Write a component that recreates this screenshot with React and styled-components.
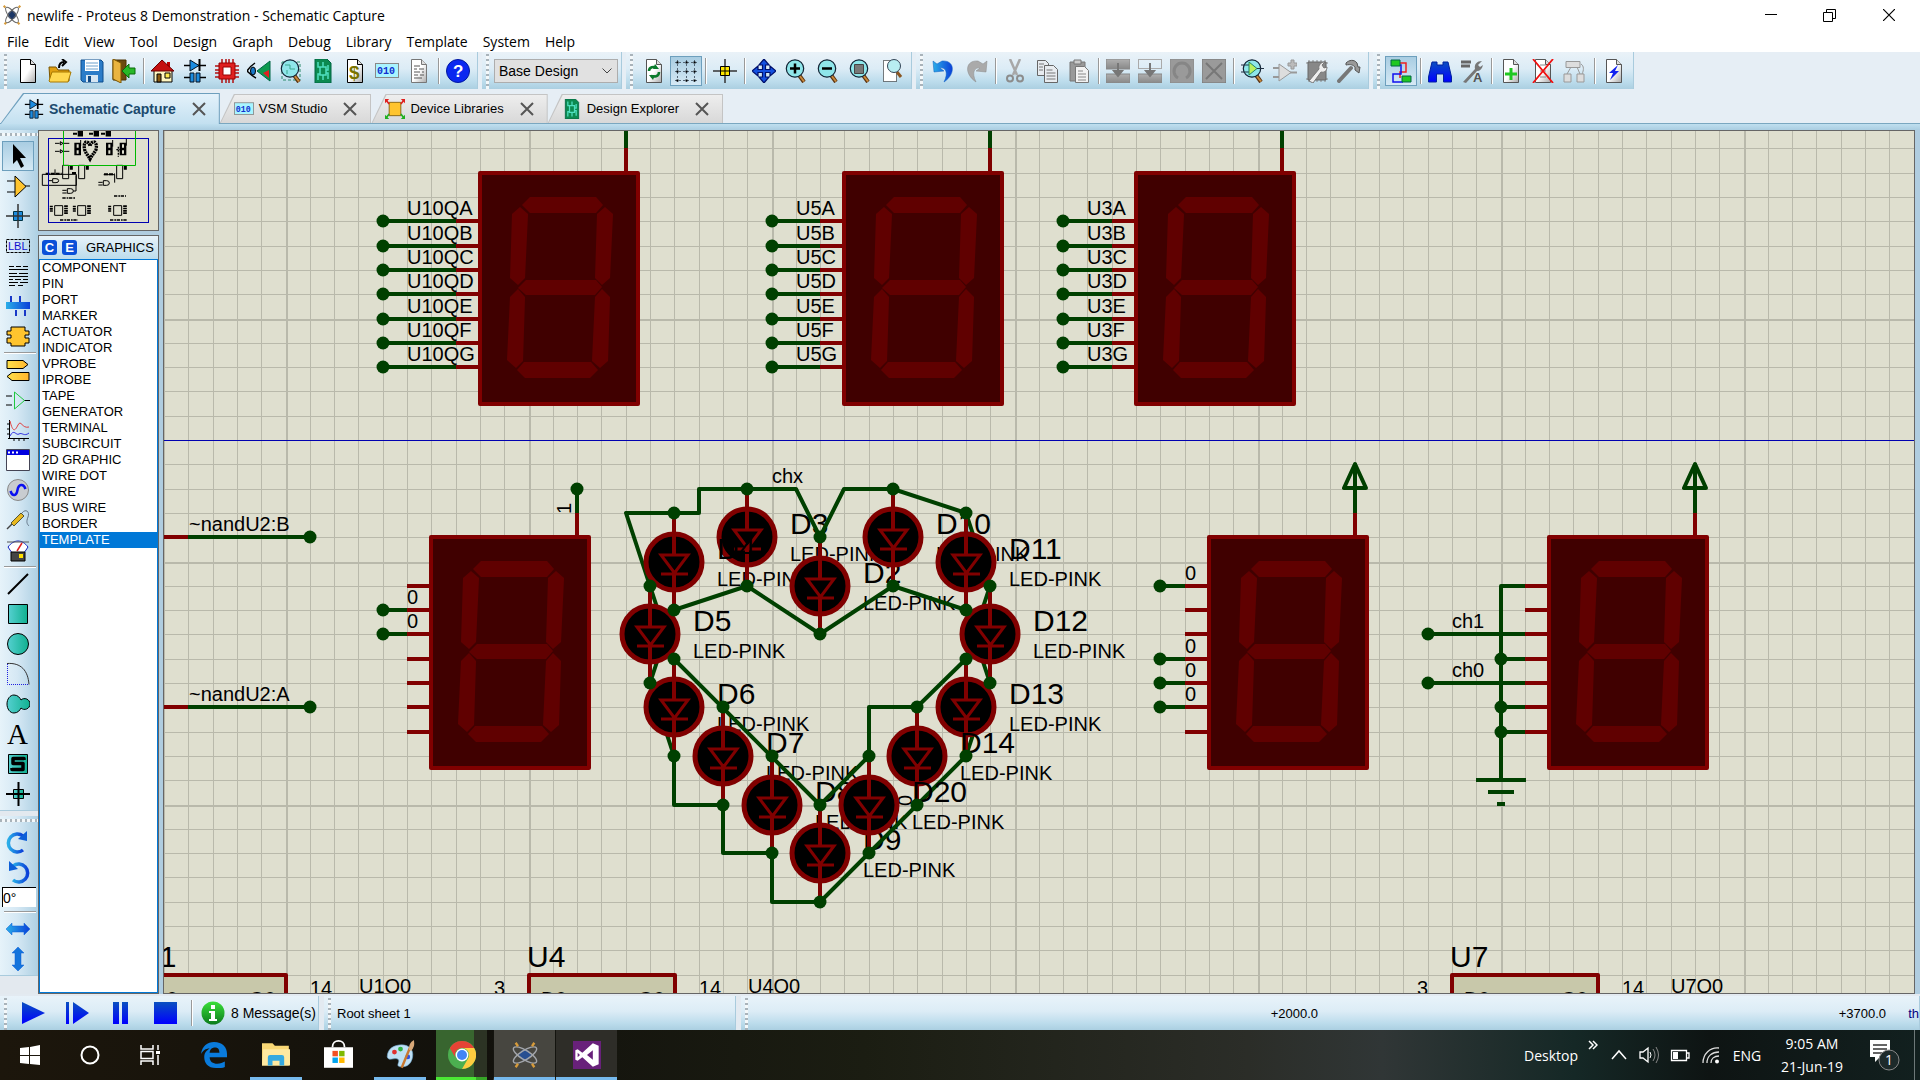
import React from "react";
import styled, { createGlobalStyle, css } from "styled-components";

const UI = `"Liberation Sans", Arial, sans-serif`;
const SHELL = `"Open Sans", "Noto Sans", sans-serif`;

const Global = createGlobalStyle`
  * { box-sizing: border-box; }
  body { margin: 0; background: #e6eef5; font-family: ${UI}; font-size: 13px; color: #000; overflow: hidden; }
  button { font: inherit; color: inherit; margin: 0; padding: 0; border: 0; background: none; }
  svg { display: block; flex: none; }
`;

const App_ = styled.div`display: flex; flex-direction: column; height: 100vh;`;

/* ---------- title and menu ---------- */
const TitleBar = styled.header`
  display: flex; align-items: center; height: 30px; padding: 0 2px; background: #fff;
  font-family: ${SHELL}; font-size: 14px;
`;
const Title = styled.h1`flex: 1; margin: 0 0 0 5px; font-size: 14px; font-weight: 400;`;
const WindowButton = styled.button`width: 59px; height: 30px; display: grid; place-items: center;`;
const MenuBar = styled.nav`
  display: flex; gap: 15px; height: 22px; padding-left: 7px; background: #fff;
  font-family: ${SHELL}; font-size: 14px; line-height: 24px;
`;

/* ---------- toolbars ---------- */
const ToolbarRow = styled.div`display: flex; gap: 4px; height: 37px; background: #e6eef5;`;
const Toolbar = styled.div`
  display: flex; align-items: center; padding-right: 3px; border-right: 1px solid #a9cbdd;
  background: linear-gradient(#eaf2f8, #dcecf6 45%, #bcdcec 80%, #abcfe1);
`;
const Grip = styled.span`
  align-self: stretch; flex: none;
  background-image: linear-gradient(#a9b3ba 50%, #f4f8fa 50%);
  ${(p) => p.$across
    ? css`height: 3px; margin: 3px 0 5px; background-image: linear-gradient(90deg, #a9b3ba 50%, #f4f8fa 50%); background-size: 5px 3px;`
    : css`width: 3px; margin: 2px 5px 0 4px; background-size: 3px 5px;`}
`;
const Tool = styled.button`
  width: 32px; height: 30px; display: grid; place-items: center; flex: none;
  ${(p) => p.$active && css`border: 1px solid #6d9fbd; background: linear-gradient(#a9cde2, #d5e9f5);`}
`;
const Rule = styled.span`
  flex: none;
  ${(p) => p.$across
    ? css`height: 2px; width: 32px; margin: 1px 0 1px 4px; background: #999; border-bottom: 1px solid #fff;`
    : css`width: 2px; height: 26px; margin: 0 2px 0 3px; background: #999; border-right: 1px solid #fff;`}
`;
const SelectBox = styled.div`display: grid; width: 124px; height: 24px; align-items: center; & > * { grid-area: 1 / 1; }`;
const Select = styled.select`
  appearance: none; width: 100%; height: 24px; padding: 0 4px; border: 1px solid #adadad; border-radius: 0;
  background: #e1e1e1; font: 14px ${UI}; color: #000;
`;
const SelectArrow = styled.svg`justify-self: end; margin-right: 6px; pointer-events: none;`;

/* ---------- tabs ---------- */
const Tabs = styled.div`
  display: flex; align-items: flex-end; height: 35px; background: linear-gradient(#7aa7c0, #7aa7c0) bottom / 100% 1px no-repeat #e6eef5;
`;
const Tab = styled.div`
  position: relative; isolation: isolate; display: flex; align-items: center;
  height: ${(p) => (p.$active ? 31 : 29)}px;
  margin-bottom: ${(p) => (p.$active ? 0 : 1)}px;
  padding: 0 14px 0 ${(p) => (p.$active ? 24 : 14)}px;
  font-size: ${(p) => (p.$active ? 14 : 13)}px;
  font-weight: ${(p) => (p.$active ? 700 : 400)};
  color: ${(p) => (p.$active ? "#1c4a6e" : "#000")};
  &::before, &::after {
    content: ""; position: absolute; z-index: -1; inset: 0;
    clip-path: polygon(${(p) => (p.$active ? 23 : 14)}px 0, 100% 0, 100% 100%, 0 100%);
    background: ${(p) => (p.$active ? "#6d9fbd" : "#c4c4c4")};
  }
  &::after {
    inset: 1px 1px 0 1px;
    background: ${(p) => (p.$active ? "linear-gradient(#e4f2fb, #c3e0f0)" : "linear-gradient(#eeeeee, #d8d8d8)")};
  }
`;
const TabName = styled.button`display: flex; align-items: center; gap: 5px; white-space: nowrap;`;
const TabClose = styled.button`display: grid; place-items: center; margin-left: 16px;`;
const Band = styled.div`height: 6px; background: linear-gradient(#bfdfef, #aacde1);`;

/* ---------- work area ---------- */
const Main = styled.main`display: flex; flex: 1; min-height: 0; background: #b0cde0;`;
const ModeColumn = styled.div`width: 38px; background: #e3e9ef; display: flex; flex-direction: column; gap: 5px;`;
const ModeBar = styled.div`
  display: flex; flex-direction: column; padding-bottom: 1px; border-bottom: 1px solid #a9cbdd;
  background: linear-gradient(90deg, #e6f3fa, #d5e8f4 45%, #aed0e3);
  ${Tool} { margin-left: 2px; }
`;
const AngleInput = styled.input`
  width: 34px; height: 20px; margin: 0 0 3px 2px; padding: 0; border: 1px solid #000; border-width: 1px 0 0 1px; border-radius: 0;
  background: #fff; font: 14px ${UI};
`;
const Side = styled.div`width: 121px; display: flex; flex-direction: column; gap: 4px; margin-right: 4px;`;
const Overview = styled.div`height: 101px; border: 1px solid #666; background: #dfdfcf;`;
const Selector = styled.section`flex: 1; min-height: 0; display: flex; flex-direction: column; border: 1px solid #666;`;
const SelectorHead = styled.div`
  display: flex; align-items: center; gap: 5px; height: 23px; padding-left: 3px;
  background: linear-gradient(#e8f3fa, #bcdcec);
`;
const Chip = styled.button`
  width: 15px; height: 15px; border-radius: 3px; background: #0a50d8; color: #fff; font-weight: 700; line-height: 15px;
`;
const SelectorTitle = styled.h2`margin: 0 0 0 4px; font-size: 13px; font-weight: 400;`;
const List = styled.ul`flex: 1; margin: 0; padding: 0; list-style: none; background: #fff; border: 1px solid #0078d7;`;
const Item = styled.li`
  padding-left: 2px; line-height: 16px;
  ${(p) => p.$selected && css`background: #0078d7; color: #fff;`}
`;
const Sheet = styled.div`
  flex: 1; min-width: 0; margin-right: 5px; border: 1px solid #666; background: #dfdfcf; overflow: hidden;
`;
const Drawing = styled.svg`
  width: 100%; height: 100%; font-family: ${UI};
`;

/* ---------- status ---------- */
const StatusBar = styled.footer`display: flex; gap: 5px; height: 36px; padding-top: 2px; background: #e3eaf1;`;
const StatusPart = styled.div`
  display: flex; align-items: center; width: ${(p) => p.$width}; flex: ${(p) => (p.$width ? "none" : 1)};
  border-right: 1px solid #a9cbdd; white-space: nowrap; overflow: hidden;
  background: linear-gradient(#e8f3fa, #dcecf6 45%, #bcdcec 80%, #abcfe1);
`;
const RunButton = styled.button`width: 44px; height: 30px; display: grid; place-items: center;`;
const Messages = styled.button`display: flex; align-items: center; gap: 6px; margin-left: 6px; font-size: 14px;`;
const StatusText = styled.span`margin-left: 1px;`;
const Coordinates = styled.div`
  flex: 1; display: grid; grid-template-columns: 565px 1fr 33px; text-align: right;
`;
const Unit = styled.span`color: #000080;`;

/* ---------- taskbar ---------- */
const TaskBar = styled.footer`
  display: flex; height: 50px; color: #fff; font-family: ${SHELL}; font-size: 14px;
  background: linear-gradient(90deg, #1c160c, #12110c 25%, #1b1d12 45%, #2b2d28 65%, #303636 72%, #152826 82%, #0e1413 89%, #12201f);
`;
const TaskButton = styled.button`
  width: ${(p) => (p.$app ? 62 : 60)}px; height: 50px; display: grid; place-items: center; flex: none;
  border-bottom: 3px solid transparent; padding-top: 2px;
  ${(p) => p.$open && css`
    background: linear-gradient(#76b9ed, #76b9ed) bottom / 52px 3px no-repeat border-box;
  `}
  ${(p) => p.$front && css`
    border-left: 1px solid #14140f;
    background: linear-gradient(#76b9ed, #76b9ed) bottom / 100% 3px no-repeat border-box, ${p.$front};
  `}
  ${(p) => p.$progress && css`
    background: linear-gradient(90deg, #4be834 40px, #36a527 40px) 5px 100% / 51px 3px no-repeat border-box,
      linear-gradient(90deg, #38652f 38px, #2c3324 38px) 5px 0 / 51px 100% no-repeat border-box;
  `}
`;
const Apps = styled.div`display: flex; flex: 1; & > :nth-child(4) { margin-left: 3px; }`;
const Tray = styled.div`display: flex; align-items: center;`;
const TrayButton = styled.button`
  display: grid; place-items: center; height: 50px; width: ${(p) => p.$width}px;
  align-content: center; line-height: 23px; white-space: nowrap;
`;
const ShowDesktop = styled.button`width: 6px; height: 50px; border-left: 1px solid #6d7878;`;

/* ================= icons ================= */
const I = ({ children, s = 24, b = 24 }) => (
  <svg width={s} height={s} viewBox={`0 0 ${b} ${b}`} aria-hidden="true">{children}</svg>
);
const SharedPaint = () => (
  <svg width="0" height="0" style={{ position: "absolute" }} aria-hidden="true">
    <defs>
      <linearGradient id="teal"><stop stopColor="#55d0d0" /><stop offset="1" stopColor="#10b090" /></linearGradient>
      <linearGradient id="gold"><stop stopColor="#ffe04a" /><stop offset="1" stopColor="#ffb52e" /></linearGradient>
      <linearGradient id="blueH"><stop stopColor="#2aaee8" /><stop offset="1" stopColor="#0a3fd8" /></linearGradient>
      <linearGradient id="blueV" x2="0" y2="1"><stop stopColor="#0a50c0" /><stop offset="1" stopColor="#0000ff" /></linearGradient>
      <linearGradient id="greenV" x2="0" y2="1"><stop stopColor="#3ae03a" /><stop offset="1" stopColor="#0c7a1c" /></linearGradient>
      <linearGradient id="greyD" x2="1" y2="1"><stop offset=".5" stopColor="#fff" /><stop offset="1" stopColor="#aaa" /></linearGradient>
      <linearGradient id="greyV" x2="0" y2="1"><stop stopColor="#b0b0b0" /><stop offset="1" stopColor="#888" /></linearGradient>
    </defs>
  </svg>
);
const Paper = ({ stroke = "#000" }) => (
  <>
    <path d="M4.500.5h10l5 5v18h-15z" fill="url(#greyD)" stroke={stroke} />
    <path d="M14.500.5v5h5" fill="#ddd" stroke={stroke} />
  </>
);
const Lens = ({ children }) => (
  <>
    <path d="M15 16l5 7" stroke="#5a3210" strokeWidth="4" />
    <path d="M15 16l5 6.500" stroke="#c98a3c" strokeWidth="2" />
    <circle cx="11" cy="9.500" r="8.700" fill="#8fe6ea" stroke="#123" strokeWidth="1.200" />
    {children}
  </>
);
const Pcb = () => (
  <>
    <path d="M4 0h12l4 4v20H4z" fill="#0c8a50" stroke="#064" />
    <path d="M9 8h6v8H9zM7 3v5h2M12 3v5M17 6v5h-2M7 21v-6h2M12 21v-5M17 20v-6h-2" fill="none" stroke="#4fe0c0" strokeWidth="1.500" />
  </>
);
const Binary = () => (
  <>
    <rect x="0.500" y="4.500" width="23" height="14" fill="#a8f4ff" stroke="#888" />
    <text x="2" y="15" fontFamily="Liberation Mono" fontSize="10" fontWeight="700" fill="#1030d0">010</text>
  </>
);
const Diode = () => (
  <>
    <path d="M1 6.500h22" stroke="#000" strokeWidth="1.500" />
    <path d="M7 1l9 5.500L7 12z" fill="#1c8ce0" stroke="#012" />
    <path d="M16.500 0v12" stroke="#000" strokeWidth="2" />
    <path d="M1 18.500h6M17 18.500h6" stroke="#000" strokeWidth="1.500" />
    <path d="M7 14h4v9H7zM13 14h4v9h-4z" fill="#1c8ce0" stroke="#012" />
  </>
);
const Atom = ({ dim }) => (
  <g fill="none" strokeWidth="1.200" stroke={dim ? "#a3a6ab" : "#666"}>
    <circle cx="12" cy="12" r="5" fill={dim ? "#274f92" : "#1a3666"} stroke="none" />
    <ellipse cx="12" cy="12" rx="11.500" ry="4" transform={`rotate(${dim ? 32 : 52} 12 12)`} />
    <ellipse cx="12" cy="12" rx="11.500" ry="4" transform={`rotate(${dim ? -32 : -52} 12 12)`} />
    {dim
      ? <path d="M4 1.500l2 3M20 1.500l-2 3M4 22.500l2-3M20 22.500l-2-3" stroke="#d79b3a" strokeWidth="2" />
      : <path d="M2 1l2 2M22 1l-2 2M3 23l2-2M21 23l-2-2" stroke="#d79b3a" strokeWidth="2.500" />}
  </g>
);
const BlockGrey = ({ children, top = true }) => (
  <>
    {top ? <rect width="24" height="10" fill="url(#greyV)" stroke="#888" /> : <rect x=".5" y=".5" width="23" height="9" fill="none" stroke="#aaa" />}
    <rect y="15" width="24" height="9" fill="url(#greyV)" stroke="#888" />
    {children}
  </>
);
const Curl = ({ a, b }) => (
  <path d="M1 2l1 11 10-1-4-3c5-1 9 4 4 14 12-8 11-22-2-21L5 5z" fill={a} stroke={b} strokeWidth=".5" />
);
const ic = {
  file: <Paper />,
  open: <><path d="M1 8h7l2 3h11v11H2z" fill="#e0a010" stroke="#7a5500" /><path d="M1 22l3-9h19l-3 10H2z" fill="#ffd850" stroke="#a87800" /><path d="M11 9c0-5 2-6 5-6M14 0l4 3-4 4" fill="none" stroke="#000" strokeWidth="2" /></>,
  save: <><path d="M1 1h20l2 2v20H3l-2-2z" fill="#2b7cc8" stroke="#0d4d8c" /><path d="M5 1h14v11H5z" fill="#fff" /><path d="M6 4h12M6 7h12M6 10h12" stroke="#6aa0cc" /><path d="M6 16h12v7H6z" fill="#d7e6f2" /><path d="M8 17h3v6H8z" fill="#124b86" /></>,
  exit: <><path d="M1 1h13v20H1z" fill="#6b4a10" stroke="#4c3000" /><path d="M1 0l8 4v20l-8-4z" fill="#e9b440" stroke="#7a5500" /><path d="M23 9h-6V5l-7 7 7 7v-4h6z" fill="#28b828" stroke="#0a6a0a" /></>,
  home: <><path d="M16 3h3v6h-3z" fill="#c00000" /><path d="M3 11h18v12H3z" fill="#fff6c0" stroke="#000" /><path d="M0 12L11 1l12 11H0z" fill="#c41010" stroke="#600" /><path d="M6 15h4v8H6z" fill="#8a5a10" stroke="#000" /><path d="M14 14h5v5h-5z" fill="#ffea50" stroke="#000" /></>,
  diode: <Diode />,
  chip: <><path d="M7 0v24M11 0v24M14 0v24M18 0v24M0 7h24M0 11h24M0 14h24M0 18h24" stroke="#b01010" strokeWidth="1.500" /><path d="M4 4h16v16H4z" fill="#e02020" stroke="#900" /><path d="M8 8h8v8H8z" fill="#fff" stroke="#900" /></>,
  eye: <><path d="M8 4C2 8 1 11 0 12c3 3 5 5 9 7" fill="none" stroke="#000" strokeWidth="1.500" /><ellipse cx="6" cy="12" rx="2.500" ry="4" fill="#1878c8" stroke="#000" /><path d="M10 12L23 2v20z" fill="#0d9a50" stroke="#064" /><path d="M16 14l6-3v8z" fill="#e02020" /></>,
  zoomPcb: <><path d="M3 3h18v18H3z" fill="none" stroke="#2a8a6a" strokeDasharray="3 2" /><Lens><path d="M6 6h5v4h5M8 15v-4" stroke="#3aa890" fill="none" /></Lens></>,
  pcb: <Pcb />,
  bill: <><Paper /><text x="6" y="20" fontFamily="Liberation Sans" fontSize="19" fontWeight="700" fill="#7a7400">$</text></>,
  binary: <Binary />,
  notes: <><Paper stroke="#777" /><path d="M7 7h6M7 10h3M12 10h5M7 13h6M15 13h2M7 16h4M13 16h4M7 19h8" stroke="#555" /></>,
  help: <><circle cx="12" cy="12" r="11.500" fill="#0a28f0" stroke="#0018a0" /><text x="7" y="18" fontFamily="Liberation Sans" fontSize="17" fontWeight="700" fill="#fff">?</text></>,
  refresh: <><Paper stroke="#555" /><path d="M7 12c0-4 5-5 7-3M17 13c0 5-5 5-8 4" fill="none" stroke="#0a7a2a" strokeWidth="2.500" /><path d="M13 5l4 5h-6zM11 21l-4-5h6z" fill="#0a7a2a" /></>,
  dots: <><path d="M1 3.500h22M1 12.500h22M1 21.500h22M3.500 1v22M12.500 1v22M20.500 1v22" stroke="#567" strokeDasharray="2 2" /><path d="M2.500 3.500h2M11.500 3.500h2M19.500 3.500h2M2.500 12.500h2M11.500 12.500h2M19.500 12.500h2M2.500 21.500h2M11.500 21.500h2M19.500 21.500h2" stroke="#000" strokeWidth="2" /></>,
  origin: <><path d="M12 0v24M0 12h24" stroke="#333" strokeWidth="1.500" /><path d="M7.500 7.500h9v9h-9z" fill="#ffe800" stroke="#000" /><path d="M12 8v8M8 12h8" stroke="#000" /></>,
  pan: <path d="M12 0l5 6h-3.500v4.500H18V7l6 5-6 5v-3.500h-4.500V18H17l-5 6-5-6h3.500v-4.500H6V17l-6-5 6-5v3.500h4.500V6H7z" fill="#1450e0" stroke="#00106a" strokeWidth="1.200" />,
  zin: <Lens><path d="M6 9.500h10M11 4.500v10" stroke="#000" strokeWidth="2.500" /></Lens>,
  zout: <Lens><path d="M6 9.500h10" stroke="#000" strokeWidth="2.500" /></Lens>,
  zall: <Lens><path d="M6.500 5.500h9v9h-9z" fill="#777" stroke="#444" /></Lens>,
  zarea: <><path d="M3.500 1.500h13v21h-13z" fill="#fff" stroke="#000" strokeDasharray="1 1" /><path d="M17 13l4 5" stroke="#8a5520" strokeWidth="3" /><circle cx="14" cy="7" r="6.500" fill="#b8eef2" stroke="#345" /></>,
  undo: <Curl a="url(#blueH)" b="#0d5cc0" />,
  redo: <g transform="translate(24 0) scale(-1 1)"><Curl a="#aaa" b="#888" /></g>,
  cut: <g stroke="#8c8c8c" fill="none" strokeWidth="2"><path d="M7 0l7 16M17 0l-7 16" stroke="#a8a8a8" strokeWidth="2.500" /><circle cx="7" cy="19.500" r="3" /><circle cx="17" cy="19.500" r="3" /></g>,
  copy: <g stroke="#666" fill="#e8ecf0"><path d="M2.500 1.500h8l3 3v12h-11z" /><path d="M9.500 6.500h9l4 4v13h-13z" /><path d="M4 5h5M4 8h4M4 11h4M11.500 11h6M11.500 14h9M11.500 17h9M11.500 20h9" fill="none" stroke="#777" /></g>,
  paste: <><path d="M3 3h15v19H3z" fill="#999" stroke="#777" /><path d="M7 1h7v4H7z" fill="#ccc" stroke="#777" /><path d="M8.500 7.500h9l4 4v12h-13z" fill="#f2f2f2" stroke="#777" /><path d="M11 12h5M11 15h8M11 18h8M11 21h8" stroke="#888" /></>,
  bcopy: <BlockGrey><path d="M12 4v8M8 12h8l-4 5z" fill="#777" stroke="#777" strokeWidth="2" /></BlockGrey>,
  bmove: <BlockGrey top={false}><path d="M12 4v8M8 12h8l-4 5z" fill="#777" stroke="#777" strokeWidth="2" /></BlockGrey>,
  brot: <><path d="M0 0h24v24H0z" fill="#9a9a9a" stroke="#888" /><path d="M8 19a8 8 0 1 1 8 0" fill="none" stroke="#868686" strokeWidth="3" /></>,
  bdel: <><path d="M0 0h24v24H0z" fill="#9a9a9a" stroke="#777" /><path d="M4 4l16 16M20 4L4 20" stroke="#777" strokeWidth="2" /></>,
  pick: <Lens><path d="M0 6h8M0 13h8M16 9.500h7" stroke="#234" /><path d="M8 3l8 6.500L8 16z" fill="#b8f060" stroke="#286" /></Lens>,
  make: <g stroke="#999" fill="#ddd"><path d="M0 9h6M0 18h6M17 13.500h7" strokeWidth="2" /><path d="M6 5l12 8.500L6 22z" /><path d="M15 4h3V1h3v3h3v3h-3v3h-3V7h-3z" fill="#bbb" /></g>,
  pack: <><path d="M4 1v22M8 1v22M12 1v22M16 1v22M20 1v22M1 4h22M1 20h22" stroke="#888" /><path d="M3 3h18v18H3z" fill="#888" stroke="#666" /><path d="M4 22L14 10c-1-4 2-7 6-7l-3 3 2 3 3-1c0 4-3 6-6 5L8 24z" fill="#eee" stroke="#777" /></>,
  hammer: <><path d="M2 22L14 9" stroke="#777" strokeWidth="4" strokeLinecap="round" /><path d="M9 4c3-3 8-4 11 0l1 4 2 0-1 6-4-3 0-3c-2-2-4-3-9-2z" fill="#999" stroke="#555" /></>,
  wire: <><path d="M8 4h9v9h-6v6" fill="none" stroke="#f02020" strokeWidth="1.500" /><path d="M8 6h4v9H4v8h10" fill="none" stroke="#1010f0" strokeWidth="1.500" /><path d="M2 1h9v6H2zM13 17h9v6h-9z" fill="#20c820" stroke="#064" /></>,
  find: <path d="M4 3h5v3h6V3h5l3.500 15v5h-8v-8h-7v8h-8v-5z" fill="url(#blueV)" stroke="#0020a0" />,
  prop: <><path d="M1 3h10M1 7h9" stroke="#666" strokeWidth="3" /><path d="M3 23L15 10c-1-5 2-8 7-8l-4 4 2 2 3-2c-1 4-3 6-6 6L6 24z" fill="#777" /><text x="13" y="23" fontFamily="Liberation Sans" fontSize="13" fontWeight="700" fill="#555">A</text></>,
  addSheet: <><Paper stroke="#555" /><path d="M12 9v12M6 15h12" stroke="#20c820" strokeWidth="3" /></>,
  delSheet: <><Paper stroke="#555" /><path d="M9 6h6M9 12h6M9 18h6" stroke="#888" /><path d="M2 0l20 24M22 0L2 24" stroke="#f01010" strokeWidth="1.800" /></>,
  tree: <g fill="#ddd" stroke="#999"><path d="M3 2.500h14v6H3zM1 15h7v8H1zM14 15h7v8h-7z" /><path d="M8 8l-4 7M14 8l3 7M18 5c3 2 3 6 1 10" fill="none" /></g>,
  bolt: <><Paper stroke="#555" /><path d="M16 6l-9 8h4l-3 7 9-9h-4z" fill="#1020f0" /></>,
  arrow: <path d="M7 0v20l4-4 4 8 3-2-4-8h6z" fill="#000" />,
  comp: <><path d="M1 7h8M1 18h8M19 12h5" stroke="#000" /><path d="M9 2l11 10.500L9 23z" fill="#ffc42e" stroke="#000" /></>,
  junction: <><path d="M7.500 7.500h9v9h-9z" fill="#1c8ce0" stroke="#034" /><path d="M12 0v24M0 12h24" stroke="#333" strokeWidth="1.500" /></>,
  label: <><path d="M.5 5.500h23v13H.5z" fill="none" stroke="#000" strokeDasharray="3 1" /><text x="2" y="16" fontFamily="Liberation Sans" fontSize="11" fill="#1010d0">LBL</text></>,
  script: <path d="M3 2.500h5M10 2.500h5M17 2.500h5M3 5.500h19M3 9.500h8M13 9.500h9M3 12.500h19M3 15.500h4M9 15.500h6M17 15.500h5M3 18.500h9M14 18.500h8M3 21.500h6M12 21.500h5" stroke="#000" />,
  bus: <><path d="M5 2v6M14 2v6M10 16v6M19 16v6" stroke="#1838c8" strokeWidth="2" /><path d="M0 8h24v7H0z" fill="url(#blueH)" /></>,
  sub: <path d="M5 3h14v4h4v4h-4v3h4v5h-4v3H5v-3H1v-5h4v-3H1V7h4z" fill="#ffc42e" stroke="#000" />,
  term: <g fill="url(#gold)" stroke="#000"><path d="M1 2.500h16l5 4-5 4H1zM23 14.500H6l-5 4 5 4h17z" /></g>,
  pin: <><path d="M0 8h6M0 17h6M18 12.500h6" stroke="#000" /><path d="M8.500 4v17l10-8.500z" fill="none" stroke="#20c840" /></>,
  graph: <><path d="M3.500 2v19M2 20.500h21M1 6h2M1 11h2M1 16h2M8 20v3M13 20v3M18 20v3" stroke="#000" /><path d="M4 3c3 12 5 10 8 4s4 4 11 2" fill="none" stroke="#e04040" /><path d="M4 18c4-8 6 0 9-2s5 3 10-1" fill="none" stroke="#3030e0" /></>,
  popup: <><path d="M.5 1.500h23v21H.5z" fill="#fff" stroke="#445" /><path d="M1 2h22v5H1z" fill="#0000e0" /><path d="M2 4.500h2M6 4.500h2M10 4.500h2" stroke="#fff" strokeWidth="2" /></>,
  gen: <><circle cx="12" cy="12" r="10.500" fill="#c8ccd0" stroke="#888" /><path d="M4.500 13c2 6 6 5 7-1s6-7 8-1" fill="none" stroke="#0a10f0" strokeWidth="2.500" /></>,
  probe: <><path d="M1 21l5-5" stroke="#444" strokeWidth="1.500" /><path d="M5 15L15 5l3 3L8 18z" fill="#e8b820" stroke="#553" /><path d="M16 5c4-5 8-1 6 4s-1 7 1 9" fill="none" stroke="#678" /></>,
  meter: <><path d="M2 9C8 1 16 1 22 9l-4 6H6z" fill="#fff" stroke="#1020c0" /><path d="M1 4h22" stroke="#555" /><path d="M11 13l5-8" stroke="#e02020" strokeWidth="1.500" /><path d="M5 14h14v9H5z" fill="#444" stroke="#000" /><path d="M13 16h4v4h-4z" fill="#ffe000" /></>,
  line: <path d="M2 22L22 2" stroke="#000" strokeWidth="2" />,
  box: <path d="M2.500 2.500h19v19h-19z" fill="url(#teal)" stroke="#000" />,
  circ: <circle cx="12" cy="12" r="10.500" fill="url(#teal)" stroke="#000" />,
  arc: <><path d="M1.500 2v20.500H23" fill="none" stroke="#2020e0" strokeDasharray="1 1" /><path d="M1 1.500c14-1 21 7 22 21" fill="none" stroke="#333" /></>,
  path: <path d="M8 3c4 0 6 3 7 5 3-3 9-1 9 4s-6 7-9 4c-1 2-3 5-7 5-4 0-7-4-7-9s3-9 7-9z" fill="url(#teal)" stroke="#000" />,
  text: <text x="1" y="22" fontFamily="Liberation Serif" fontSize="29" fill="#000">A</text>,
  sym: <><path d="M2.500 2.500h19v19h-19z" fill="url(#teal)" stroke="#000" /><path d="M18 8V6.500H7v5h10v6H6V16" fill="none" stroke="#000" strokeWidth="3.500" strokeLinejoin="round" /></>,
  mark: <><path d="M7.500 7.500h10v9h-10z" fill="url(#teal)" stroke="#000" /><path d="M12.500 0v24M0 12h24" stroke="#000" strokeWidth="2" /></>,
  cw: <><path d="M17 20a9 9 0 1 1 0-14" fill="none" stroke="url(#blueH)" strokeWidth="3.500" /><path d="M21 1v10l-9-2z" fill="#0d5fd8" /></>,
  ccw: <><path d="M7 20a9 9 0 1 0 0-14" fill="none" stroke="url(#blueH)" strokeWidth="3.500" /><path d="M3 1v10l9-2z" fill="#0d5fd8" /></>,
  flipH: <path d="M0 12l6-6v3h12V6l6 6-6 6v-3H6v3z" fill="url(#blueH)" stroke="#0d5fd8" strokeWidth=".5" />,
  flipV: <path d="M12 0l6 6h-3v12h3l-6 6-6-6h3V6H6z" fill="#1474dc" stroke="#0d5fd8" strokeWidth=".5" />,
  lib: <><path d="M5 4h14v16H5z" fill="#ffc42e" stroke="#7a5500" /><path d="M5 6l-4-5M19 6l4-5" stroke="#e02020" strokeWidth="2" /><path d="M5 18l-4 5M19 18l4 5" stroke="#20b020" strokeWidth="2" /><path d="M0 0h5L0 5zM24 0v5l-5-5z" fill="#e02020" /><path d="M0 24v-5l5 5zM24 24h-5l5-5z" fill="#20b020" /></>,
};

const bars = [
  [["New project", "file"], ["Open project", "open"], ["Save project", "save"], ["Close project", "exit"], 0, ["Home", "home"], ["Schematic capture", "diode"], ["PCB layout", "chip"], ["3D visualizer", "eye"], ["Gerber viewer", "zoomPcb"], ["Design explorer", "pcb"], ["Bill of materials", "bill"], ["Source code", "binary"], ["Project notes", "notes"], 0, ["Help", "help"]],
  [["Redraw", "refresh"], ["Grid", "dots", 1], 0, ["Origin", "origin"], 0, ["Pan", "pan"], ["Zoom in", "zin"], ["Zoom out", "zout"], ["Zoom all", "zall"], ["Zoom area", "zarea"]],
  [["Undo", "undo"], ["Redo", "redo"], 0, ["Cut", "cut"], ["Copy", "copy"], ["Paste", "paste"], 0, ["Block copy", "bcopy"], ["Block move", "bmove"], ["Block rotate", "brot"], ["Block delete", "bdel"], 0, ["Pick parts", "pick"], ["Make device", "make"], ["Packaging tool", "pack"], ["Decompose", "hammer"]],
  [["Wire autorouter", "wire", 1], 0, ["Search", "find"], ["Property assignment", "prop"], 0, ["New sheet", "addSheet"], ["Remove sheet", "delSheet"], ["Exit to parent", "tree"], 0, ["Electrical check", "bolt"]],
];
const modes = [["Selection", "arrow", 1], ["Component", "comp"], ["Junction dot", "junction"], ["Wire label", "label"], ["Text script", "script"], ["Buses", "bus"], ["Subcircuit", "sub"], 0, ["Terminals", "term"], ["Device pins", "pin"], ["Graph", "graph"], ["Active popup", "popup"], ["Generator", "gen"], ["Probe", "probe"], ["Instruments", "meter"], 0, ["Line", "line"], ["Box", "box"], ["Circle", "circ"], ["Arc", "arc"], ["Path", "path"], ["Text", "text"], ["Symbols", "sym"], ["Markers", "mark"]];
const turns = [["Rotate clockwise", "cw"], ["Rotate anti-clockwise", "ccw"]];
const flips = [["Mirror horizontally", "flipH"], ["Mirror vertically", "flipV"]];

const Tools = ({ items, across }) =>
  items.map((t, i) => t
    ? <Tool key={i} type="button" aria-label={t[0]} $active={t[2]}><I>{ic[t[1]]}</I></Tool>
    : <Rule key={i} $across={across} />);

/* ================= schematic ================= */
const PITCH = 24.3;
const gx = (n) => Math.floor(122 + PITCH * n);
const gy = (n) => Math.floor(188 + PITCH * n);
const WIRE = "#004000";
const PIN = "#800000";

const Line = ({ pts, color = WIRE }) => (
  <polyline points={pts.map(([x, y]) => `${gx(x)},${gy(y)}`).join(" ")} fill="none" stroke={color} strokeWidth="4" strokeLinejoin="round" />
);
const Dot = ({ x, y }) => <circle cx={gx(x)} cy={gy(y)} r="6.500" fill={WIRE} />;
const Label = ({ x, y, size = 20, children, turn }) => (
  <text x={x} y={y} fontSize={size} transform={turn ? `rotate(-90 ${x} ${y})` : undefined}>{children}</text>
);

const Grid = () => {
  const lines = [];
  for (let n = -5; n < 150; n++) {
    const w = n % 10 === 0 ? 2 : 1;
    lines.push(<rect key={"v" + n} x={gx(n)} y="0" width={w} height="100%" />);
  }
  for (let n = -7; n < 80; n++) {
    const w = n % 10 === 0 ? 2 : 1;
    lines.push(<rect key={"h" + n} x="0" y={gy(n)} width="100%" height={w} />);
  }
  return <g fill="#b9b9ab">{lines}</g>;
};

const segments = [
  "42,32 50,24 116,24 123,32 116,40 50,40",
  "40,34 48,41 45,105 38,112 30,105 32,41",
  "125,34 133,41 130,105 122,112 115,105 117,41",
  "38,115 46,107 116,107 122,114 115,122 46,122",
  "38,116 45,124 43,188 36,195 27,187 30,124",
  "122,116 130,124 128,188 120,195 112,188 115,124",
  "37,197 44,189 111,189 118,197 110,205 45,205",
];
const Display = ({ x, y, green = [] }) => (
  <g>
    {[0, 1, 2, 3, 4, 5, 6].map((i) => <Line key={i} color={PIN} pts={[[x - 1, y + 2 + i], [x, y + 2 + i]]} />)}
    <Line color={PIN} pts={[[x + 6, y - 1], [x + 6, y]]} />
    {green.map(([from, row, text, tx]) => (
      <g key={row}>
        <Line pts={[[from, row], [x - 1, row]]} />
        <Dot x={from} y={row} />
        {text && <Label x={gx(tx)} y={gy(row) - 6}>{text}</Label>}
      </g>
    ))}
    <g transform={`translate(${gx(x)} ${gy(y)})`}>
      <rect width="158" height="231" fill="#400000" stroke={PIN} strokeWidth="4" strokeLinejoin="round" />
      {segments.map((s) => <polygon key={s} points={s} fill="#600000" />)}
    </g>
  </g>
);

const Led = ({ x, y }) => {
  const cx = gx(x), cy = gy(y);
  return (
    <g fill="none" stroke={PIN} strokeWidth="4">
      <Line color={PIN} pts={[[x, y - 2], [x, y + 2]]} />
      <circle cx={cx} cy={cy} r="28" fill="#000" strokeWidth="5" />
      <path d={`M${cx} ${cy - 28}V${cy + 28}`} />
      <path d={`M${cx - 13} ${cy - 7}h27l-13.500 18zM${cx - 13} ${cy + 12}h27`} fill="#000" strokeWidth="3" />
    </g>
  );
};
const leds = [
  ["D3", 19, 9], ["D4", 16, 10, 1], ["D2", 22, 11], ["D10", 25, 9], ["D11", 28, 10], ["D5", 15, 13], ["D12", 29, 13],
  ["D6", 16, 16], ["D7", 18, 18], ["D8", 20, 20], ["D9", 22, 22], ["D13", 28, 16], ["D14", 26, 18, 1], ["D20", 24, 20, 1],
];
const heart = [
  [[16, 14], [15, 11], [14, 8], [16, 8], [17, 8], [17, 7], [21, 7], [22, 9], [23, 7], [25, 7], [28, 8], [29, 11], [28, 14]],
  [[16, 18], [15, 15], [16, 12], [19, 11], [22, 13], [25, 11], [28, 12], [29, 15], [28, 18]],
  [[16, 14], [22, 20], [24, 18], [24, 16], [26, 16], [28, 14]],
  [[16, 18], [16, 20], [18, 20], [18, 22], [20, 22], [20, 24], [22, 24], [28, 18]],
];
const LedName = ({ led: [name, x, y] }) => <Label x={gx(x) + 43} y={gy(y) - 3} size={30}>{name}</Label>;
const Power = ({ x }) => (
  <g fill="none" stroke={WIRE} strokeWidth="4">
    <path d={`M${gx(x)} ${gy(8)}V${gy(6)}l-11 24h22l-11 -24`} strokeLinejoin="round" />
  </g>
);
const Counter = ({ x, name, out, pin }) => (
  <g>
    <rect x={gx(x)} y={gy(27)} width="146" height="100" fill="#c8c8aa" stroke={PIN} strokeWidth="4" strokeLinejoin="round" />
    <Label x={gx(x) - 2} y={gy(27) - 8} size={30}>{name}</Label>
    {pin && <Label x={gx(x) - 35} y={864}>3</Label>}
    <Label x={gx(x) + 170} y={864}>14</Label>
    <Label x={gx(x) + 219} y={862}>{out}</Label>
    <Label x={gx(x) + 12} y={875}>D0</Label>
    <Label x={gx(x) + 109} y={875}>Q0</Label>
  </g>
);
const rows = (prefix, from, tx) => "ABCDEFG".split("").map((c, i) => [from, i - 4, prefix + c, tx]);

const Schematic = () => (
  <Drawing aria-label="Schematic sheet">
    <Grid />
    <rect x="0" y={gy(5)} width="100%" height="1" fill="#0000b0" />
    {[14, 29, 41].map((x) => <Line key={x} pts={[[x, -8], [x, -7]]} />)}
    <Display x={8} y={-6} green={rows("U10Q", 4, 5)} />
    <Display x={23} y={-6} green={rows("U5", 20, 21)} />
    <Display x={35} y={-6} green={rows("U3", 32, 33)} />
    <Display x={6} y={9} green={[[4, 12, "0", 5], [4, 13, "0", 5]]} />
    <Display x={38} y={9} green={[[36, 11, "0", 37], [36, 14, "0", 37], [36, 15, "0", 37], [36, 16, "0", 37]]} />
    <Line pts={[[51, 11], [50, 11], [50, 19]]} />
    <Display x={52} y={9} green={[[47, 13, "ch1", 48], [50, 14], [47, 15, "ch0", 48], [50, 16], [50, 17]]} />
    <path d={`M${gx(50) - 25} ${gy(19)}h50M${gx(50) - 13} ${gy(19) + 12}h26M${gx(50) - 4} ${gy(19) + 24}h8`} stroke={WIRE} strokeWidth="4" />
    <Power x={44} />
    <Power x={58} />
    <Line pts={[[12, 7], [12, 8]]} />
    <Dot x={12} y={7} />
    <Label x={407} y={383} turn>1</Label>
    {[[9, "B"], [16, "A"]].map(([y, c]) => (
      <g key={c}>
        <Line color={PIN} pts={[[-6, y], [-4, y]]} />
        <Line pts={[[-4, y], [1, y]]} />
        <Dot x={1} y={y} />
        <Label x={25} y={gy(y) - 6}>{`~nandU2:${c}`}</Label>
      </g>
    ))}
    <Label x={gx(20)} y={gy(7) - 6}>chx</Label>
    {leds.map((l) => (
      <g key={l[0]}>
        {!l[3] && <LedName led={l} />}
        <Label x={gx(l[1]) + 43} y={gy(l[2]) + 24}>LED-PINK</Label>
      </g>
    ))}
    <Label x={748} y={675} turn>0</Label>
    {heart.map((p, i) => <Line key={i} pts={p} />)}
    {leds.map((l) => <Led key={l[0]} x={l[1]} y={l[2]} />)}
    {leds.filter((l) => l[3]).map((l) => <LedName key={l[0]} led={l} />)}
    {leds.map((l) => <g key={l[0]}><Dot x={l[1]} y={l[2] - 2} /><Dot x={l[1]} y={l[2] + 2} /></g>)}
    <Counter x={-6} name="U1" out="U1Q0" />
    <Counter x={10} name="U4" out="U4Q0" pin />
    <Counter x={48} name="U7" out="U7Q0" pin />
  </Drawing>
);

const MiniMap = () => (
  <svg width="119" height="99" viewBox="117 18 357 297" aria-label="Sheet overview">
    <g fill="none" stroke="#000" strokeWidth="3">
      <path d="M165 55h14M165 79h14M190 55h18M190 79h18M188 121h18v40h-18zM236 121h18v40h-18zM350 121h18v40h-18zM127 148h102v33H127zM228 181v-30M181 50l8 5-8 5zM181 74l8 5-8 5zM311 149h33v24M338 45v20M379 42v20M165 133v15M242 45v18" />
      <path d="M158 161h10q8 0 8 6t-8 6h-10zM146 167h10M310 167h10q8 0 8 7t-8 7h-10zM295 172h13M295 180h13M202 191h10q8 0 8 7t-8 7h-10zM187 196h13M187 204h13M220 198h8v-18" />
      <path d="M164 242h24v29h-24zM233 242h24v29h-24zM341 242h24v29h-24z" />
    </g>
    <g stroke="#000" fill="none" strokeWidth="9">
      <path d="M198 241v28M267 241v28M375 241v28" strokeDasharray="5 2" strokeWidth="11" />
      <path d="M154 242v18M223 242v18M329 242v18" strokeDasharray="5 2" />
      <path d="M219 26h12M267 26h12M303 26h12" strokeWidth="6" />
      <path d="M233 26h16M281 26h16M317 26h16" strokeWidth="17" />
      <path d="M233 53v38M328 53v38M369 53v38" strokeWidth="20" />
      <path d="M233 58v10M233 76v10M328 58v10M328 76v10M369 58v10M369 76v10" stroke="#dfdfcf" strokeWidth="6" />
      <path d="M349 74h12M355 65v30" strokeWidth="4" strokeDasharray="6 3" />
      <path d="M270 62c-6-18-22-14-16 12 4 12 8 14 16 28 6-12 12-16 18-28 6-26-12-30-18-12" strokeDasharray="6 2" strokeWidth="10" />
      <path d="M214 122v14M262 122v14M376 122v14" strokeDasharray="12 2" />
      <path d="M137 146h48M216 144h14M312 148h32" strokeWidth="6" strokeDasharray="12 3" />
      <path d="M187 219h38M342 213h36M180 285h54M330 285h52" strokeWidth="5" strokeDasharray="10 3 5 2" />
    </g>
    <rect x="145.500" y="40.500" width="300" height="252" fill="none" stroke="#0000b0" strokeWidth="3" />
    <path d="M190.500 18v103.500h216V18" fill="none" stroke="#00b800" strokeWidth="3" />
  </svg>
);

/* ================= page ================= */
const tabs = [["Schematic Capture", "diode", 1], ["VSM Studio", "binary"], ["Device Libraries", "lib"], ["Design Explorer", "pcb"]];
const objects = ["COMPONENT", "PIN", "PORT", "MARKER", "ACTUATOR", "INDICATOR", "VPROBE", "IPROBE", "TAPE", "GENERATOR", "TERMINAL", "SUBCIRCUIT", "2D GRAPHIC", "WIRE DOT", "WIRE", "BUS WIRE", "BORDER", "TEMPLATE"];
const menus = ["File", "Edit", "View", "Tool", "Design", "Graph", "Debug", "Library", "Template", "System", "Help"];

export default function App() {
  return (
    <App_>
      <Global />
      <SharedPaint />
      <TitleBar>
        <I s={20}><Atom /></I>
        <Title>newlife - Proteus 8 Demonstration - Schematic Capture</Title>
        <WindowButton type="button" aria-label="Minimize"><I s={12} b={12}><path d="M0 5.500h12" stroke="#000" /></I></WindowButton>
        <WindowButton type="button" aria-label="Restore"><I s={13} b={13}><path d="M.5 3.500h9v9h-9zM3.500 3V.5h9v9H10" fill="none" stroke="#000" /></I></WindowButton>
        <WindowButton type="button" aria-label="Close"><I s={12} b={12}><path d="M0 0l12 12M12 0L0 12" stroke="#000" strokeWidth="1.200" /></I></WindowButton>
      </TitleBar>
      <MenuBar>{menus.map((m) => <button type="button" key={m}>{m}</button>)}</MenuBar>
      <ToolbarRow>
        <Toolbar><Grip /><Tools items={bars[0]} /></Toolbar>
        <Toolbar>
          <Grip />
          <SelectBox>
            <Select aria-label="Design variant" defaultValue="Base Design"><option>Base Design</option></Select>
            <SelectArrow width="10" height="6" viewBox="0 0 10 6" aria-hidden="true"><path d="M.5.5L5 5 9.500.5" fill="none" stroke="#444" /></SelectArrow>
          </SelectBox>
        </Toolbar>
        {bars.slice(1).map((b, i) => <Toolbar key={i}><Grip /><Tools items={b} /></Toolbar>)}
      </ToolbarRow>
      <Tabs>
        {tabs.map(([name, icon, active]) => (
          <Tab key={name} $active={active}>
            <TabName type="button"><I s={20}>{ic[icon]}</I>{name}</TabName>
            <TabClose type="button" aria-label={`Close ${name}`}><I s={14} b={14}><path d="M1 1l12 12M13 1L1 13" stroke="#555" strokeWidth="2" /></I></TabClose>
          </Tab>
        ))}
      </Tabs>
      <Band />
      <Main>
        <ModeColumn>
          <ModeBar><Grip $across /><Tools items={modes} across /></ModeBar>
          <ModeBar>
            <Grip $across />
            <Tools items={turns} />
            <AngleInput aria-label="Rotation angle" defaultValue="0°" />
            <Rule $across />
            <Tools items={flips} />
          </ModeBar>
        </ModeColumn>
        <Side>
          <Overview><MiniMap /></Overview>
          <Selector>
            <SelectorHead><Chip type="button">C</Chip><Chip type="button">E</Chip><SelectorTitle>GRAPHICS</SelectorTitle></SelectorHead>
            <List>{objects.map((o) => <Item key={o} $selected={o === "TEMPLATE"}>{o}</Item>)}</List>
          </Selector>
        </Side>
        <Sheet><Schematic /></Sheet>
      </Main>
      <StatusBar>
        <StatusPart $width="319px">
          <Grip />
          <RunButton type="button" aria-label="Run"><I><path d="M0 1l23 11L0 23z" fill="url(#blueV)" /></I></RunButton>
          <RunButton type="button" aria-label="Step"><I><path d="M0 1h3v22H0zM7 1l16 11L7 23z" fill="url(#blueV)" /></I></RunButton>
          <RunButton type="button" aria-label="Pause"><I><path d="M3 1h6v22H3zM12 1h6v22h-6z" fill="url(#blueV)" /></I></RunButton>
          <RunButton type="button" aria-label="Stop"><I><path d="M0 1h23v22H0z" fill="url(#blueV)" /></I></RunButton>
          <Rule />
          <Messages type="button">
            <I><circle cx="12" cy="12" r="11.500" fill="url(#greenV)" /><path d="M10 4h4v4h-4zM8 10h6v8h2v2H8v-2h2v-6H8z" fill="#fff" /></I>
            8 Message(s)
          </Messages>
        </StatusPart>
        <StatusPart $width="412px"><Grip /><StatusText>Root sheet 1</StatusText></StatusPart>
        <StatusPart><Grip /><Coordinates><span>+2000.0</span><span>+3700.0</span><Unit>th</Unit></Coordinates></StatusPart>
      </StatusBar>
      <TaskBar>
        <Apps>
          <TaskButton type="button" aria-label="Start"><I s={20} b={20}><path d="M0 3l9-1v8H0zM10 2l10-2v10H10zM0 11h9v8l-9-1zM10 11h10v9l-10-1z" fill="#fff" /></I></TaskButton>
          <TaskButton type="button" aria-label="Cortana"><I s={20} b={20}><circle cx="10" cy="10" r="8.500" fill="none" stroke="#fff" strokeWidth="2" /></I></TaskButton>
          <TaskButton type="button" aria-label="Task view"><I s={20} b={20}><path d="M1 0v4h12V0M1 20v-4h12v4M1 6.500h12v7H1zM18 0v5M18 10v10" fill="none" stroke="#fff" strokeWidth="1.500" /><path d="M16 6h4v3h-4z" fill="#fff" /></I></TaskButton>
          <TaskButton $app type="button" aria-label="Edge"><I s={26}><path d="M0 11C1 4 6 0 12 0c8 0 12 5 12 11v3H8c0 4 3 6 7 6 3 0 5-1 7-2v5c-2 1-5 1-8 1C6 24 3 19 3 14c0-4 2-6 5-8-4 0-6 2-8 5zm8-1h9c0-3-1-5-4-5s-5 2-5 5z" fill="#0a7bdc" /></I></TaskButton>
          <TaskButton $app $open type="button" aria-label="File Explorer"><I s={28}><path d="M0 2h9l2 2h12v17H0z" fill="#f8d775" /><path d="M1 7h23v14H0z" fill="#ffe9a0" /><path d="M5 21v-7q0-2 2-2h10q2 0 2 2v7h-4v-4H9v4z" fill="#35a9e0" /></I></TaskButton>
          <TaskButton $app type="button" aria-label="Store"><I s={29}><path d="M0 6h24v17H0z" fill="#fff" /><path d="M7 6c0-7 10-7 10 0" fill="none" stroke="#fff" strokeWidth="1.500" /><path d="M7 9h4.500v4.500H7z" fill="#f25022" /><path d="M12.500 9H17v4.500h-4.500z" fill="#7fba00" /><path d="M7 14.500h4.500V19H7z" fill="#00a4ef" /><path d="M12.500 14.500H17V19h-4.500z" fill="#ffb900" /></I></TaskButton>
          <TaskButton $app $open type="button" aria-label="Paint"><I s={29}><path d="M1 14C1 7 7 4 13 4s10 4 9 10-5 9-11 8c-3-1 1-4-1-6s-8 2-9-2z" fill="#bfe0f5" stroke="#6da5cc" strokeWidth=".5" /><circle cx="7" cy="10" r="2" fill="#e03030" /><circle cx="12" cy="7.500" r="2" fill="#30b040" /><circle cx="18" cy="14" r="2" fill="#3050e0" /><path d="M13 23l7-17" stroke="#c87830" strokeWidth="2" /><path d="M19 8c0-4 1-6 4-8 1 4 0 6-2 9z" fill="#d8a878" /></I></TaskButton>
          <TaskButton $app $progress type="button" aria-label="Chrome"><I s={28}><circle cx="12" cy="12" r="12" fill="#4caf50" /><path d="M1.600 6A12 12 0 0 1 22.400 6H12a6 6 0 0 0-5.500 8.500z" fill="#e54335" /><path d="M22.400 6A12 12 0 0 1 12 24l5.200-9A6 6 0 0 0 12 6z" fill="#ffcd40" /><circle cx="12" cy="12" r="5.500" fill="#fff" /><circle cx="12" cy="12" r="4.300" fill="#4285f4" /></I></TaskButton>
          <TaskButton $app $front="#474640" type="button" aria-label="Proteus"><I s={28}><Atom dim /></I></TaskButton>
          <TaskButton $app $front="#2e2d28" type="button" aria-label="Visual Studio"><I s={28}><path d="M0 0h24v24H0z" fill="#68217a" /><path d="M17 2l5 2v16l-5 2-9-8-4 3-2-1V8l2-1 4 3zM17 8l-5 4 5 4zM4 10v4l2-2z" fill="#fff" fillRule="evenodd" /></I></TaskButton>
        </Apps>
        <Tray>
          <TrayButton $width={60} type="button">Desktop</TrayButton>
          <TrayButton $width={24} type="button" aria-label="More"><svg width="10" height="30" viewBox="0 0 10 30"><path d="M1 1l4 4-4 4M5 1l4 4-4 4" fill="none" stroke="#fff" strokeWidth="1.500" /></svg></TrayButton>
          <TrayButton $width={28} type="button" aria-label="Hidden icons"><I s={16} b={16}><path d="M1 12l7-8 7 8" fill="none" stroke="#fff" strokeWidth="1.500" /></I></TrayButton>
          <TrayButton $width={31} type="button" aria-label="Volume"><I s={20} b={20}><path d="M1 7h3l5-4v14l-5-4H1z" fill="none" stroke="#fff" strokeWidth="1.300" /><path d="M11 7q2 3 0 6" fill="none" stroke="#fff" /><path d="M14 4q4 6 0 12M17 2q5 8 0 16" fill="none" stroke="#888" /></I></TrayButton>
          <TrayButton $width={31} type="button" aria-label="Battery"><I s={20} b={20}><path d="M1.500 5.500h15v10h-15zM17 8h2v5h-2" fill="none" stroke="#fff" strokeWidth="1.300" /><path d="M3 7h5v7H3z" fill="#fff" /></I></TrayButton>
          <TrayButton $width={31} type="button" aria-label="Network"><I s={18} b={18}><path d="M1 17C1 8 8 1 17 2M5 17c0-7 5-11 12-11M9 17c0-4 3-7 8-7" fill="none" stroke="#ddd" strokeWidth="1.300" /><circle cx="15" cy="15.500" r="2" fill="#fff" /></I></TrayButton>
          <TrayButton $width={42} type="button">ENG</TrayButton>
          <TrayButton $width={88} type="button"><span>9:05 AM</span><span>21-Jun-19</span></TrayButton>
          <TrayButton $width={58} type="button" aria-label="Notifications">
            <svg width="32" height="32" viewBox="0 0 32 32">
              <path d="M1 1h20v17H11l-5 5v-5H1z" fill="#fff" /><path d="M4 6h14M4 10h14M4 14h9" stroke="#333" strokeWidth="1.500" />
              <circle cx="20" cy="21" r="10" fill="#1d2a2a" stroke="#888" />
              <text x="16" y="26" fontSize="14" fill="#fff">1</text>
            </svg>
          </TrayButton>
          <ShowDesktop type="button" aria-label="Show desktop" />
        </Tray>
      </TaskBar>
    </App_>
  );
}
